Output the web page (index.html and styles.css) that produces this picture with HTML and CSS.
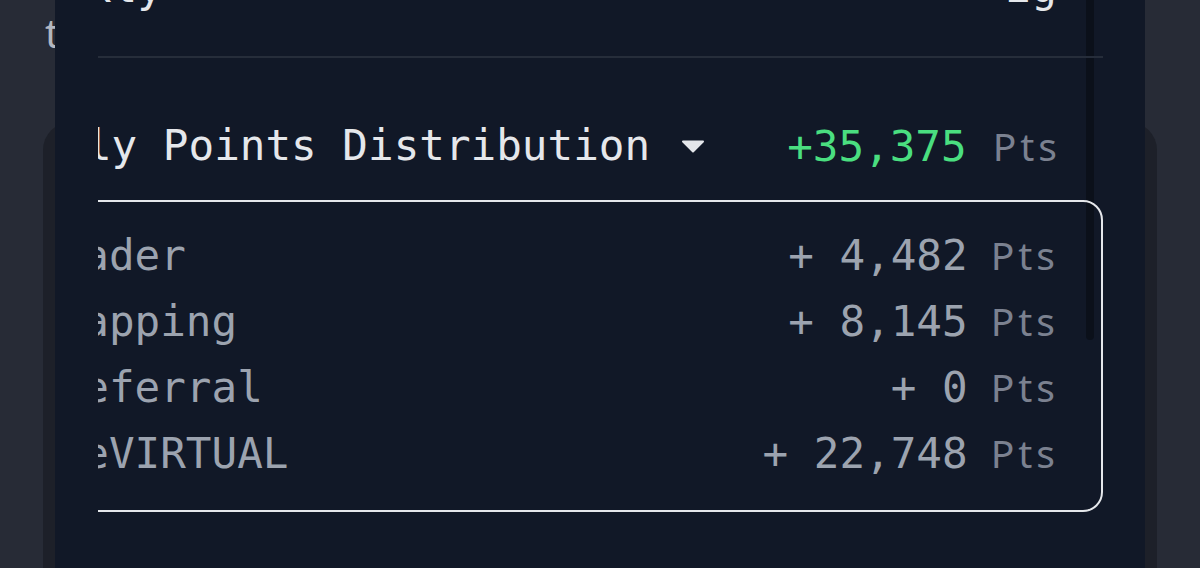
FILE: index.html
```html
<!DOCTYPE html>
<html lang="en">
<head>
<meta charset="utf-8">
<title>Points Distribution</title>
<link rel="stylesheet" href="styles.css">
</head>
<body>
  <div class="page">
    <div class="page-title">total</div>
    <div class="page-card"></div>
  </div>

  <div class="modal">
    <div class="scroll-thumb"></div>
    <div class="viewport">
      <div class="content">
        <div class="top-row">
          <span class="top-label">Weekly</span>
          <span class="top-value">2g</span>
        </div>
        <div class="sep"></div>

        <div class="summary">
          <div class="summary-title">
            <span>Daily Points Distribution</span>
            <svg class="caret" width="24" height="13" viewBox="0 0 24 13" aria-hidden="true">
              <path d="M2 1.5 H22 L12 11.5 Z" fill="#e5e7eb" stroke="#e5e7eb" stroke-width="2" stroke-linejoin="round"/>
            </svg>
          </div>
          <div class="summary-total">
            <span class="total-num">+35,375</span><span class="pts">Pts</span>
          </div>
        </div>

        <div class="box">
          <div class="row">
            <span class="label">Trader</span>
            <span class="value">+ 4,482<span class="pts">Pts</span></span>
          </div>
          <div class="row">
            <span class="label">Swapping</span>
            <span class="value">+ 8,145<span class="pts">Pts</span></span>
          </div>
          <div class="row">
            <span class="label label-indent">Referral</span>
            <span class="value">+ 0<span class="pts">Pts</span></span>
          </div>
          <div class="row">
            <span class="label label-indent">veVIRTUAL</span>
            <span class="value">+ 22,748<span class="pts">Pts</span></span>
          </div>
        </div>
      </div>
    </div>
  </div>
</body>
</html>
```

FILE: styles.css
```css
* { box-sizing: border-box; }

body {
  margin: 0;
  width: 1200px;
  height: 568px;
  overflow: hidden;
  position: relative;
  background: #272b36;
  font-family: "DejaVu Sans Mono", "Liberation Mono", monospace;
}

/* page behind the overlay */
.page {
  padding: 13px 43px 0;
}
.page-title {
  font: 40px/40px "Noto Sans", sans-serif;
  color: #b3b7c0;
  padding-left: 2px;
}
.page-card {
  margin-top: 69px;
  height: 600px;
  background: #1d2029;
  border-radius: 28px;
}

/* modal sheet */
.modal {
  position: absolute;
  top: 0;
  bottom: 0;
  left: 55px;
  right: 55px;
  background: #111827;
  padding: 0 42px 0 43px;
  overflow: hidden;
}
.scroll-thumb {
  position: absolute;
  left: 1031px;
  top: -20px;
  width: 8px;
  height: 360px;
  border-radius: 4px;
  background: #0b101a;
}
.viewport {
  position: relative;
  height: 100%;
  overflow: hidden;
}
.content {
  margin-left: -94px;
  margin-top: -38px;
  font-size: 42.6px;
}

.top-row {
  display: flex;
  justify-content: space-between;
  line-height: 50px;
  color: #e5e7eb;
  padding-left: 5px;
  padding-right: 46px;
}

.sep {
  height: 2px;
  margin-top: 44px;
  background: #262d3a;
}

.summary {
  display: flex;
  justify-content: space-between;
  align-items: center;
  height: 65px;
  line-height: 65px;
  margin-top: 55px;
  padding-left: 5px;
  padding-right: 46px;
  color: #e5e7eb;
}
.summary-title {
  display: flex;
  align-items: center;
  white-space: pre;
}
.caret {
  margin-left: 31px;
  margin-top: 2px;
}
.summary-total {
  display: flex;
  align-items: baseline;
}
.total-num {
  color: #4ade80;
}

.pts {
  font-family: "Noto Sans", sans-serif;
  font-size: 39px;
  letter-spacing: 4px;
  margin-right: -4px;
  color: #7b8190;
  margin-left: 26px;
}

.box {
  margin-top: 22px;
  border: 2px solid #e5e7eb;
  border-radius: 20px;
  padding: 20px 46px 24px 26px;
}
.row {
  display: flex;
  justify-content: space-between;
  align-items: baseline;
  line-height: 65px;
  color: #9ca3af;
  white-space: pre;
}
.label-indent {
  padding-left: 1ch;
}
.value .pts {
  margin-left: 23px;
}
```
